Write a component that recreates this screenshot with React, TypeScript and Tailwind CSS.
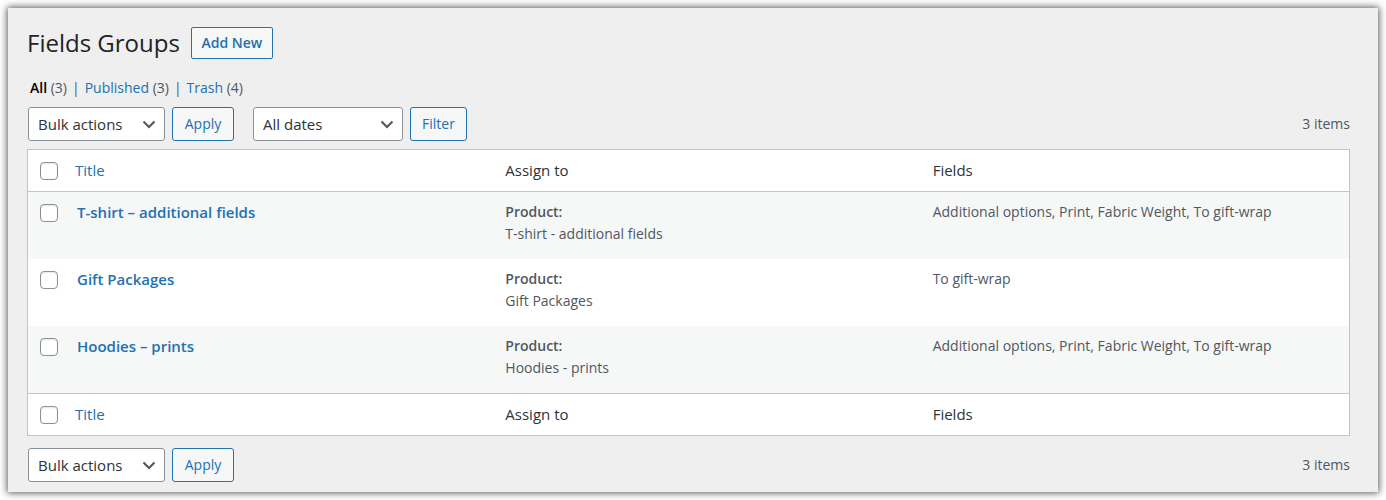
import { useState } from 'react'

interface FieldGroup {
  id: number
  title: string
  product: string
  fields: string
}

const groups: FieldGroup[] = [
  {
    id: 1,
    title: 'T-shirt – additional fields',
    product: 'T-shirt - additional fields',
    fields: 'Additional options, Print, Fabric Weight, To gift-wrap',
  },
  { id: 2, title: 'Gift Packages', product: 'Gift Packages', fields: 'To gift-wrap' },
  {
    id: 3,
    title: 'Hoodies – prints',
    product: 'Hoodies - prints',
    fields: 'Additional options, Print, Fabric Weight, To gift-wrap',
  },
]

interface SelectProps {
  label: string
  options: string[]
  className: string
}

function Select({ label, options, className }: SelectProps) {
  return (
    <div className={`grid items-center ${className}`}>
      <select
        aria-label={label}
        className="col-start-1 row-start-1 h-[34px] w-full appearance-none rounded-[3px] border border-[#8c8f94] bg-white pt-[2px] pr-7 pl-[9px] text-[15px] text-[#2c3338]"
      >
        {options.map((option) => (
          <option key={option}>{option}</option>
        ))}
      </select>
      <svg
        viewBox="0 0 18 18"
        className="pointer-events-none col-start-1 row-start-1 mr-[7px] h-[18px] w-[18px] justify-self-end"
      >
        <path d="M3.5 6.5L9 12l5.5-5.5" fill="none" stroke="#50575e" strokeWidth="2.1" />
      </svg>
    </div>
  )
}

function Button({ children, className }: { children: string; className: string }) {
  return (
    <button
      type="button"
      className={`h-[34px] rounded-[3px] border border-[#2271b1] bg-[#f6f7f7] text-sm text-[#2271b1] hover:bg-[#f0f0f1] ${className}`}
    >
      {children}
    </button>
  )
}

interface CheckboxProps {
  label: string
  checked: boolean
  onChange: () => void
}

function Checkbox({ label, checked, onChange }: CheckboxProps) {
  return (
    <input
      type="checkbox"
      aria-label={label}
      checked={checked}
      onChange={onChange}
      className="block h-[18px] w-[18px] appearance-none rounded-[4px] border border-[#8c8f94] bg-white shadow-[inset_0_1px_2px_rgba(0,0,0,0.1)] checked:bg-[#2271b1]"
    />
  )
}

function BulkActions() {
  return (
    <div className="flex gap-[7px]">
      <Select
        label="Select bulk action"
        options={['Bulk actions', 'Edit', 'Move to Trash']}
        className="w-[137px]"
      />
      <Button className="w-[62px]">Apply</Button>
    </div>
  )
}

interface HeadingRowProps {
  checked: boolean
  onChange: () => void
  className: string
}

function HeadingRow({ checked, onChange, className }: HeadingRowProps) {
  return (
    <tr className={`h-[42px] text-left text-[15px] text-[#2c3338] *:border-[#c3c4c7] ${className}`}>
      <td className="pl-3">
        <Checkbox label="Select all" checked={checked} onChange={onChange} />
      </td>
      <th scope="col" className="pl-2 font-normal">
        <a href="#title" className="text-[#2271b1]">
          Title
        </a>
      </th>
      <th scope="col" className="pl-[11px] font-normal">
        Assign to
      </th>
      <th scope="col" className="pl-[11px] font-normal">
        Fields
      </th>
    </tr>
  )
}

export default function App() {
  const [selected, setSelected] = useState<number[]>([])
  const allSelected = selected.length === groups.length

  const toggleAll = () => {
    setSelected(allSelected ? [] : groups.map((group) => group.id))
  }

  const toggle = (id: number) => {
    setSelected((prev) => (prev.includes(id) ? prev.filter((item) => item !== id) : [...prev, id]))
  }

  return (
    <div className="bg-white p-2 font-['Open_Sans','Noto_Sans',sans-serif] text-sm text-[#50575e]">
      <main className="bg-[#efefef] pt-[19px] pr-7 pb-[10px] pl-[19px] shadow-[0_0_7px_1px_rgba(0,0,0,0.65)]">
        {/* Page title */}
        <div className="flex items-center gap-[11px]">
          <h1 className="text-2xl leading-8 text-[#1d2327]">Fields Groups</h1>
          <a
            href="#add"
            className="flex h-8 w-[82px] items-center justify-center rounded-[2px] border border-[#2271b1] bg-[#f6f7f7] font-semibold text-[#2271b1]"
          >
            Add New
          </a>
        </div>

        {/* Status links */}
        <ul className="mt-[18px] flex gap-[5px] pl-[3px] leading-[22px]">
          <li>
            <a href="#all" className="font-semibold text-black">
              All
            </a>{' '}
            (3)
          </li>
          <li>|</li>
          <li>
            <a href="#published" className="text-[#2271b1]">
              Published
            </a>{' '}
            (3)
          </li>
          <li>|</li>
          <li>
            <a href="#trash" className="text-[#2271b1]">
              Trash
            </a>{' '}
            (4)
          </li>
        </ul>

        {/* Top toolbar */}
        <div className="mt-2 flex items-center pl-px">
          <BulkActions />
          <div className="ml-[19px] flex gap-[7px]">
            <Select label="Filter by date" options={['All dates']} className="w-[150px]" />
            <Button className="w-[57px]">Filter</Button>
          </div>
          <span className="ml-auto">3 items</span>
        </div>

        {/* Groups table */}
        <div className="mt-2 border border-[#c3c4c7] bg-white">
          <table className="w-full table-fixed border-separate border-spacing-0">
            <colgroup>
              <col className="w-[39px]" />
              <col />
              <col />
              <col />
            </colgroup>
            <thead>
              <HeadingRow checked={allSelected} onChange={toggleAll} className="*:border-b" />
            </thead>
            <tbody>
              {groups.map((group) => (
                <tr key={group.id} className="h-[67px] align-top leading-[22px] odd:bg-[#f6f7f7]">
                  <td className="pt-3 pl-3">
                    <Checkbox
                      label={`Select ${group.title}`}
                      checked={selected.includes(group.id)}
                      onChange={() => toggle(group.id)}
                    />
                  </td>
                  <td className="pt-[9px] pl-[10px]">
                    <a href={`#group-${group.id}`} className="text-[15px] font-semibold text-[#2271b1]">
                      {group.title}
                    </a>
                  </td>
                  <td className="pt-[9px] pl-[11px]">
                    <strong className="block font-semibold">Product:</strong>
                    {group.product}
                  </td>
                  <td className="pt-[9px] pl-[11px]">{group.fields}</td>
                </tr>
              ))}
            </tbody>
            <tfoot>
              <HeadingRow checked={allSelected} onChange={toggleAll} className="*:border-t" />
            </tfoot>
          </table>
        </div>

        {/* Bottom toolbar */}
        <div className="mt-3 flex items-center justify-between pl-px">
          <BulkActions />
          <span>3 items</span>
        </div>
      </main>
    </div>
  )
}
